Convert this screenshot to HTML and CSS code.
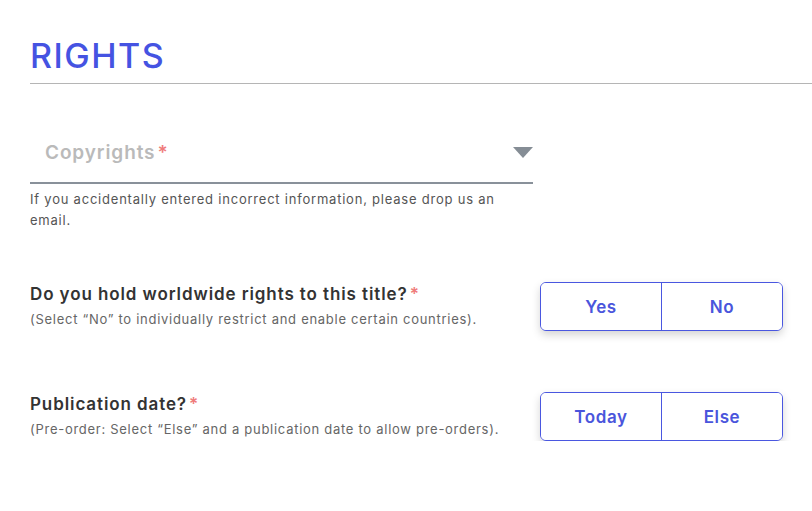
FILE: index.html
```html
<!DOCTYPE html>
<html>
<head>
<meta charset="utf-8">
<link rel="stylesheet" href="styles.css">
</head>
<body>
<div class="page">
  <header class="head">
    <h1 class="title">RIGHTS</h1>
  </header>
  <div class="content">
    <div class="field">
      <div class="select">
        <span class="placeholder">Copyrights<span class="req">*</span></span>
        <svg class="caret" width="20" height="11" viewBox="0 0 20 11"><polygon points="0,0 20,0 10,11" fill="#858d95"/></svg>
      </div>
      <p class="help">If you accidentally entered incorrect information, please drop us an email.</p>
    </div>
    <div class="row row-first">
      <div class="q">
        <div class="q-label">Do you hold worldwide rights to this title?<span class="req">*</span></div>
        <div class="q-sub">(Select “No” to individually restrict and enable certain countries).</div>
      </div>
      <div class="toggle">
        <button class="opt">Yes</button>
        <button class="opt">No</button>
      </div>
    </div>
    <div class="row">
      <div class="q">
        <div class="q-label">Publication date?<span class="req">*</span></div>
        <div class="q-sub">(Pre-order: Select “Else” and a publication date to allow pre-orders).</div>
      </div>
      <div class="toggle">
        <button class="opt">Today</button>
        <button class="opt">Else</button>
      </div>
    </div>
  </div>
</div>
</body>
</html>
```
FILE: styles.css
```css
html, body {
  margin: 0;
  padding: 0;
  background: #fff;
}
body {
  font-family: Inter, "Open Sans", sans-serif;
  color: #333;
}
.page {
  width: 812px;
}
.head {
  margin-left: 30px;
  padding-top: 36px;
  border-bottom: 1px solid #b5b5b5;
  height: 47px;
  box-sizing: content-box;
}
.title {
  margin: 0;
  font-size: 34px;
  line-height: 40px;
  font-weight: 500;
  color: #4553e2;
  letter-spacing: 1.5px;
}
.content {
  padding: 0 29px 0 30px;
}
.field {
  width: 503px;
  padding-top: 38px;
}
.select {
  display: flex;
  align-items: center;
  justify-content: space-between;
  height: 60px;
  padding: 0 0 0 15px;
  border-bottom: 2px solid #89919a;
}
.placeholder {
  font-size: 19px;
  font-weight: 600;
  letter-spacing: 0.9px;
  color: #bababa;
}
.req {
  color: #ef7c7c;
  margin-left: 2px;
}
.caret {
  display: block;
}
.help {
  margin: 5px 0 0;
  font-size: 13px;
  line-height: 21px;
  letter-spacing: 0.78px;
  color: #555;
}
.row {
  display: flex;
  justify-content: space-between;
  align-items: center;
  margin-top: 61px;
}
.row-first {
  margin-top: 51px;
}
.q {
  padding-bottom: 2px;
}
.q-label {
  font-size: 17px;
  font-weight: 600;
  line-height: 22px;
  letter-spacing: 0.9px;
  color: #333;
}
.q-sub {
  margin-top: 5px;
  font-size: 13px;
  line-height: 18px;
  letter-spacing: 0.72px;
  color: #666;
}
.toggle {
  display: flex;
  width: 243px;
  height: 49px;
  box-sizing: border-box;
  border: 1px solid #4a57e0;
  border-radius: 6px;
  box-shadow: 0 4px 9px rgba(0,0,0,0.17);
  overflow: hidden;
  background: #fff;
}
.opt {
  flex: 1;
  border: 0;
  background: #fff;
  font-family: inherit;
  font-size: 17px;
  font-weight: 600;
  letter-spacing: 0.6px;
  color: #4a55dc;
  padding: 0;
  cursor: pointer;
}
.opt + .opt {
  border-left: 1px solid #4a57e0;
}
```
